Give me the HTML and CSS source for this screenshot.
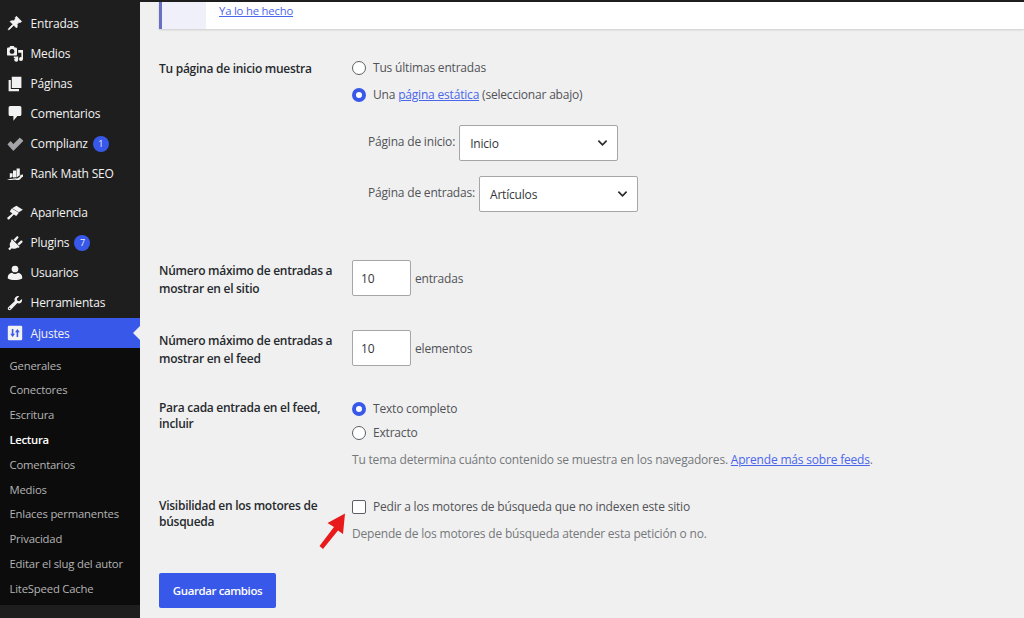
FILE: index.html
```html
<!DOCTYPE html>
<html lang="es">
<head>
  <meta charset="UTF-8">
  <meta name="viewport" content="width=device-width, initial-scale=1.0">
  <title>Ajustes de lectura</title>
  <link rel="stylesheet" href="styles.css">
</head>
<body>
  <div class="topbar"></div>
  <div class="wrap">
    <nav class="sidebar">
      <ul class="menu">
        <li><svg viewBox="0 0 20 20"><path d="M10.4 3.02l1.41-1.42 6.36 6.37-1.41 1.41c-.9-.26-1.88-.12-2.6.42l-1.6 2c.5 1.5.3 3.1-.6 4.4l-3.5-3.5L3.7 17.4c-.7.7-1.6 1.3-2 1s.3-1.3 1-2l4.7-4.8L3.9 8.1c1.3-.9 2.9-1.1 4.4-.6l1.7-1.9c.5-.7.7-1.7.4-2.6z" stroke="#f2f2f3"/></svg><span>Entradas</span></li>
        <li><svg viewBox="0 0 20 20"><path fill-rule="evenodd" d="M1.500 2H3l1-2h4.500l1 2H11q1.500 0 1.500 1.500v7Q12.500 12 11 12H1.500Q0 12 0 10.500v-7Q0 2 1.500 2zM6.300 3.800a3 3 0 1 0 .01 0zM14 5h6v11.300a2.500 2.500 0 1 1-2-2.450V8.500h-4zM8.500 13H14v4.300a2.500 2.500 0 1 1-2-2.450H8.500z"/></svg><span>Medios</span></li>
        <li><svg viewBox="0 0 20 20"><path d="M6 15V1h12v14zM4.800 5v11.200H15V19H2V5z"/></svg><span>Páginas</span></li>
        <li><svg viewBox="0 0 20 20"><path d="M4 0h12q2 0 2 2v8.500q0 2-2 2h-3l-5 6v-6H4q-2 0-2-2V2q0-2 2-2z"/></svg><span>Comentarios</span></li>
        <li><svg class="dim" viewBox="0 0 20 20"><path d="M1.500 10.500l3-3L8 11l8-8 3.500 3L8 17.500z" stroke="#a4a5a8" stroke-width="1.500" stroke-linejoin="round"/></svg><span>Complianz</span><b class="count">1</b></li>
        <li><svg viewBox="0 0 20 20"><path d="M3.500 9H7v4.500l-3.500 1.500zM7.500 5.500h4V14l-4 .5zM12 3h4v8.500L12 14.500zM0 16.500c5 .5 8-1.500 12-1 2.500.3 4-2 5-3.500l-1-.8 4-.7v3.500l-1-.7c-1.500 2.700-4 4.700-7 4.200-4-.7-7 1.300-12-1z"/></svg><span>Rank Math SEO</span></li>
        <li class="gap"><svg viewBox="0 0 20 20"><path d="M11.800.8l8 5-5 3.200-8.500-5zM5.800 4.500l9 5.200-3.300 4-3-1.700-5.600 5.700c-1.200 1-3.200-.5-2.300-2l6.200-5-3.300-2.700z"/></svg><span>Apariencia</span></li>
        <li><svg viewBox="0 0 20 20"><path d="M5 8l1.500-1.500 8 8L13 16c-2 1.500-5 1.700-7 .5L3.500 19 1.500 17.300 4 14.700C3 12.500 3.200 10 5 8zM8 6l4-4.200c1.500-1 3 .4 2 1.900L10.500 8zM13 11l4-3.800c1.500-1 3.300.8 2 2.200L15 13.200z"/><path d="M5.500 6L15 15.500" stroke="#f2f2f3" stroke-width="2"/></svg><span>Plugins</span><b class="count">7</b></li>
        <li><svg viewBox="0 0 20 20"><circle cx="10" cy="5" r="4.200"/><path d="M6.300 9.700c2.300 2 5.100 2 7.400 0 3 .3 5.300 2.600 5.300 5.300v1.800C14 19.400 6 19.400 1 16.800V15c0-2.700 2.300-5 5.300-5.300z"/></svg><span>Usuarios</span></li>
        <li><svg viewBox="0 0 20 20"><path fill-rule="evenodd" d="M17.700 9.300c-1.300 1.300-3.200 1.600-4.700.8l-8.200 8.400c-.8.8-2.400.8-3.200 0s-.8-2.400 0-3.200L9.800 7.500c-.8-1.500-.5-3.400.8-4.700C11.800 1.500 13.700 1.100 15.200 1.600l-2.900 3 .7 2.600 2.500.7 3-2.900c.5 1.400.5 3.200-.8 4.300zM3.300 16a.8.8 0 1 0 .01 0z"/></svg><span>Herramientas</span></li>
        <li class="current"><svg viewBox="0 0 20 20"><path fill-rule="evenodd" d="M2.500 1h15Q19 1 19 2.500v15q0 1.500-1.500 1.500h-15Q1 19 1 17.500v-15Q1 1 2.500 1zM6 5v6H4l3 4 3-4H8V5zM12 15V9h-2l3-4 3 4h-2v6z"/></svg><span>Ajustes</span></li>
      </ul>
      <ul class="submenu">
        <li>Generales</li>
        <li>Conectores</li>
        <li>Escritura</li>
        <li class="active">Lectura</li>
        <li>Comentarios</li>
        <li>Medios</li>
        <li>Enlaces permanentes</li>
        <li>Privacidad</li>
        <li>Editar el slug del autor</li>
        <li>LiteSpeed Cache</li>
      </ul>
    </nav>

    <main class="content">
      <div class="notice">
        <div class="notice-icon"></div>
        <a href="#">Ya lo he hecho</a>
      </div>

      <form>
        <div class="row row-home">
          <div class="th">Tu página de inicio muestra</div>
          <div class="td">
            <label class="option"><input type="radio" name="front"><span>Tus últimas entradas</span></label>
            <label class="option second"><input type="radio" name="front" checked><span>Una <a href="#">página estática</a> (seleccionar abajo)</span></label>
            <div class="pages">
              <div class="page"><span>Página de inicio:</span>
                <div class="select"><span>Inicio</span><svg viewBox="0 0 12 8"><path d="M1.500 1.500L6 6l4.500-4.500"/></svg></div>
              </div>
              <div class="page"><span>Página de entradas:</span>
                <div class="select"><span>Artículos</span><svg viewBox="0 0 12 8"><path d="M1.500 1.500L6 6l4.500-4.500"/></svg></div>
              </div>
            </div>
          </div>
        </div>

        <div class="row row-num">
          <div class="th">Número máximo de entradas a<br>mostrar en el sitio</div>
          <div class="td number"><input type="text" value="10"><span>entradas</span></div>
        </div>

        <div class="row row-num">
          <div class="th">Número máximo de entradas a<br>mostrar en el feed</div>
          <div class="td number"><input type="text" value="10"><span>elementos</span></div>
        </div>

        <div class="row row-feed">
          <div class="th">Para cada entrada en el feed,<br>incluir</div>
          <div class="td">
            <label class="option"><input type="radio" name="feed" checked><span>Texto completo</span></label>
            <label class="option"><input type="radio" name="feed"><span>Extracto</span></label>
            <p class="desc">Tu tema determina cuánto contenido se muestra en los navegadores. <a href="#">Aprende más sobre feeds</a>.</p>
          </div>
        </div>

        <div class="row row-seo">
          <div class="th">Visibilidad en los motores de<br>búsqueda</div>
          <div class="td">
            <label class="option"><input type="checkbox"><span>Pedir a los motores de búsqueda que no indexen este sitio</span></label>
            <p class="desc">Depende de los motores de búsqueda atender esta petición o no.</p>
          </div>
          <svg class="arrow" viewBox="0 0 28 38"><path d="M26 0.500L24 21 19 17.500 4 36 0.500 33 15 14 8.500 10z"/></svg>
        </div>

        <button type="button" class="save">Guardar cambios</button>
      </form>
    </main>
  </div>
</body>
</html>
```
FILE: styles.css
```css
* {
  margin: 0;
  padding: 0;
  box-sizing: border-box;
}

body {
  height: 618px;
  overflow: hidden;
  background: #f0f0f0;
  color: #505357;
  font: 12px/20px "Open Sans", "Noto Sans", sans-serif;
  letter-spacing: -0.19px;
}

ul { list-style: none; }

a {
  color: #4a66ec;
  text-decoration: underline;
}

.topbar {
  height: 2px;
  background: #1e1e1e;
}

.wrap {
  display: flex;
  height: 616px;
}

/* sidebar */
.sidebar {
  width: 140px;
  background: #1e1e1e;
  color: #f2f2f3;
}

.menu { padding-top: 6.4px; }

.menu li {
  display: flex;
  align-items: center;
  height: 30.1px;
  padding-left: 7px;
}

.menu span { padding-top: 1px; }

.menu svg {
  width: 16px;
  height: 16px;
  margin-right: 7.5px;
  fill: #f2f2f3;
}

.menu svg.dim { fill: #a4a5a8; }

.menu .gap { margin-top: 8.7px; }

.count {
  width: 16px;
  height: 16px;
  margin-left: 5px;
  border-radius: 50%;
  background: #3858e9;
  font-size: 9px;
  font-weight: 400;
  line-height: 16px;
  text-align: center;
}

.menu .current {
  position: relative;
  background: #3858e9;
}

.current::after {
  content: "";
  position: absolute;
  right: 0;
  top: 8px;
  border: 7px solid transparent;
  border-right-color: #f0f0f0;
  border-left: 0;
}

.submenu {
  height: 257px;
  padding: 4.5px 0 0 9.5px;
  background: #0c0c0c;
  color: #b4b4b5;
  font-size: 11.3px;
}

.submenu li {
  height: 24.8px;
  line-height: 25px;
  white-space: nowrap;
}

.submenu .active {
  color: #fff;
  font-weight: 600;
  letter-spacing: -0.3px;
}

/* content */
.content {
  flex: 1;
  padding-left: 19px;
}

.notice {
  display: flex;
  height: 27px;
  border-left: 3px solid #696fc3;
  background: #fff;
  box-shadow: 0 1px 2px rgba(0, 0, 0, 0.15);
}

.notice-icon {
  width: 44px;
  margin-right: 13px;
  background: #f0f0fa;
}

.notice a {
  font-size: 11.3px;
  line-height: 18px;
}

form { padding-top: 29px; }

.row {
  position: relative;
  display: grid;
  grid-template-columns: 193px 1fr;
  align-items: start;
}

.row-home { height: 202px; }
.row-num { height: 70px; }
.row-num + .row-num { height: 68.5px; }
.row-feed { height: 98px; }
.row-seo { height: 76.5px; }

.th {
  padding-top: 1.5px;
  color: #26292d;
  font-weight: 600;
  line-height: 17px;
  letter-spacing: -0.27px;
}

.row-num .th {
  padding-top: 2px;
  line-height: 17.5px;
}

.row-feed .th,
.row-seo .th {
  padding-top: 1px;
  line-height: 16.6px;
}

.option {
  display: flex;
  align-items: center;
  height: 20px;
}

.option + .option { margin-top: 4px; }
.option.second { margin-top: 7px; }

.option input {
  appearance: none;
  width: 14px;
  height: 14px;
  margin-right: 7px;
  border: 1px solid #5c5f63;
  border-radius: 50%;
  background: #fff;
}

.option input[type="checkbox"] { border-radius: 2px; }

.option input:checked { border: 4px solid #3858e9; }

.pages {
  display: grid;
  gap: 15px;
  padding: 20px 0 0 16px;
}

.page {
  display: flex;
  gap: 4px;
  line-height: 33px;
}

.select {
  display: flex;
  align-items: center;
  justify-content: space-between;
  width: 159px;
  height: 36px;
  padding: 0 9px 0 10px;
  border: 1px solid #a5a6a8;
  border-radius: 2px;
  background: #fff;
  color: #33363a;
}

.select svg {
  width: 11px;
  height: 8px;
  fill: none;
  stroke: #25282c;
  stroke-width: 1.8;
}

.number {
  display: flex;
  align-items: center;
  gap: 4px;
}

.number span { padding-top: 1px; }

.number input {
  width: 59px;
  height: 36px;
  padding-left: 8px;
  border: 1px solid #a5a6a8;
  border-radius: 2px;
  background: #fff;
  color: #33363a;
  font: inherit;
}

.desc {
  margin-top: 7px;
  color: #75787b;
}

.arrow {
  position: absolute;
  left: 160px;
  top: 16px;
  width: 28px;
  height: 38px;
  fill: #e91a1c;
}

.save {
  width: 117px;
  height: 35px;
  border: 0;
  border-radius: 2px;
  background: #3858e9;
  color: #fff;
  font: inherit;
  font-size: 11.5px;
  font-weight: 600;
  letter-spacing: -0.4px;
}
```
